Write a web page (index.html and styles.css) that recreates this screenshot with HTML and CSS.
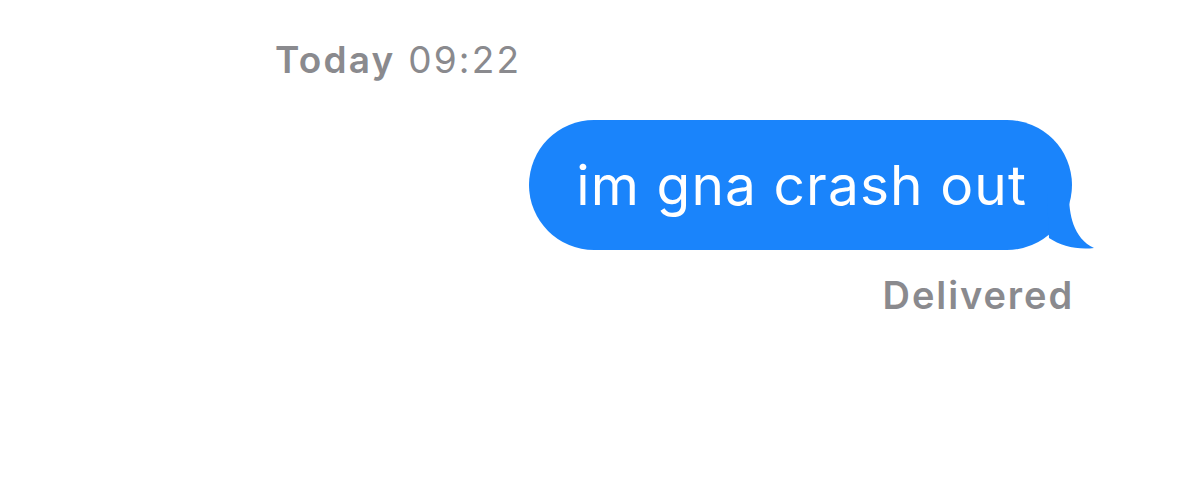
FILE: index.html
```html
<!DOCTYPE html>
<html lang="en">
<head>
  <meta charset="UTF-8" />
  <title>Messages</title>
  <link rel="stylesheet" href="styles.css">
</head>
<body>
  <main class="thread">
    <div class="timestamp"><strong>Today</strong> 09:22</div>

    <div class="row-out">
      <div class="bubble">
        im gna crash out
        <svg class="tail" width="60" height="60" viewBox="0 0 60 60">
          <path d="M0 0 L22 0 C22 20 26 44 47 54 C30 56 14 52 2 44 Z" fill="#1a84fb"/>
        </svg>
      </div>
    </div>

    <div class="status">Delivered</div>
  </main>
</body>
</html>
```

FILE: styles.css
```css
* {
  margin: 0;
  padding: 0;
  box-sizing: border-box;
}

body {
  background: white;
  font-family: Inter, "Helvetica Neue", sans-serif;
  color: #8e8e93;
}

.thread {
  display: flex;
  flex-direction: column;
  padding: 36px 107px 0 275px;
}

.timestamp {
  font-size: 37px;
  line-height: 48px;
  letter-spacing: 2.2px;
  color: #8a8a8e;
}

.timestamp strong {
  font-weight: 600;
}

.row-out {
  display: flex;
  justify-content: flex-end;
  margin-top: 36px;
}

.bubble {
  position: relative;
  background-color: #1a84fb;
  color: white;
  font-size: 55px;
  letter-spacing: 1.1px;
  line-height: 130px;
  height: 130px;
  padding: 0 45px 0 47px;
  border-radius: 65px;
}

.tail {
  position: absolute;
  right: -23px;
  bottom: -4px;
  width: 60px;
  height: 60px;
  margin-right: -12px;
}

.status {
  align-self: flex-end;
  font-size: 38px;
  font-weight: 600;
  line-height: 48px;
  letter-spacing: 1.9px;
  margin-top: 21px;
  margin-right: -2px;
  color: #8a8a8e;
}
```
